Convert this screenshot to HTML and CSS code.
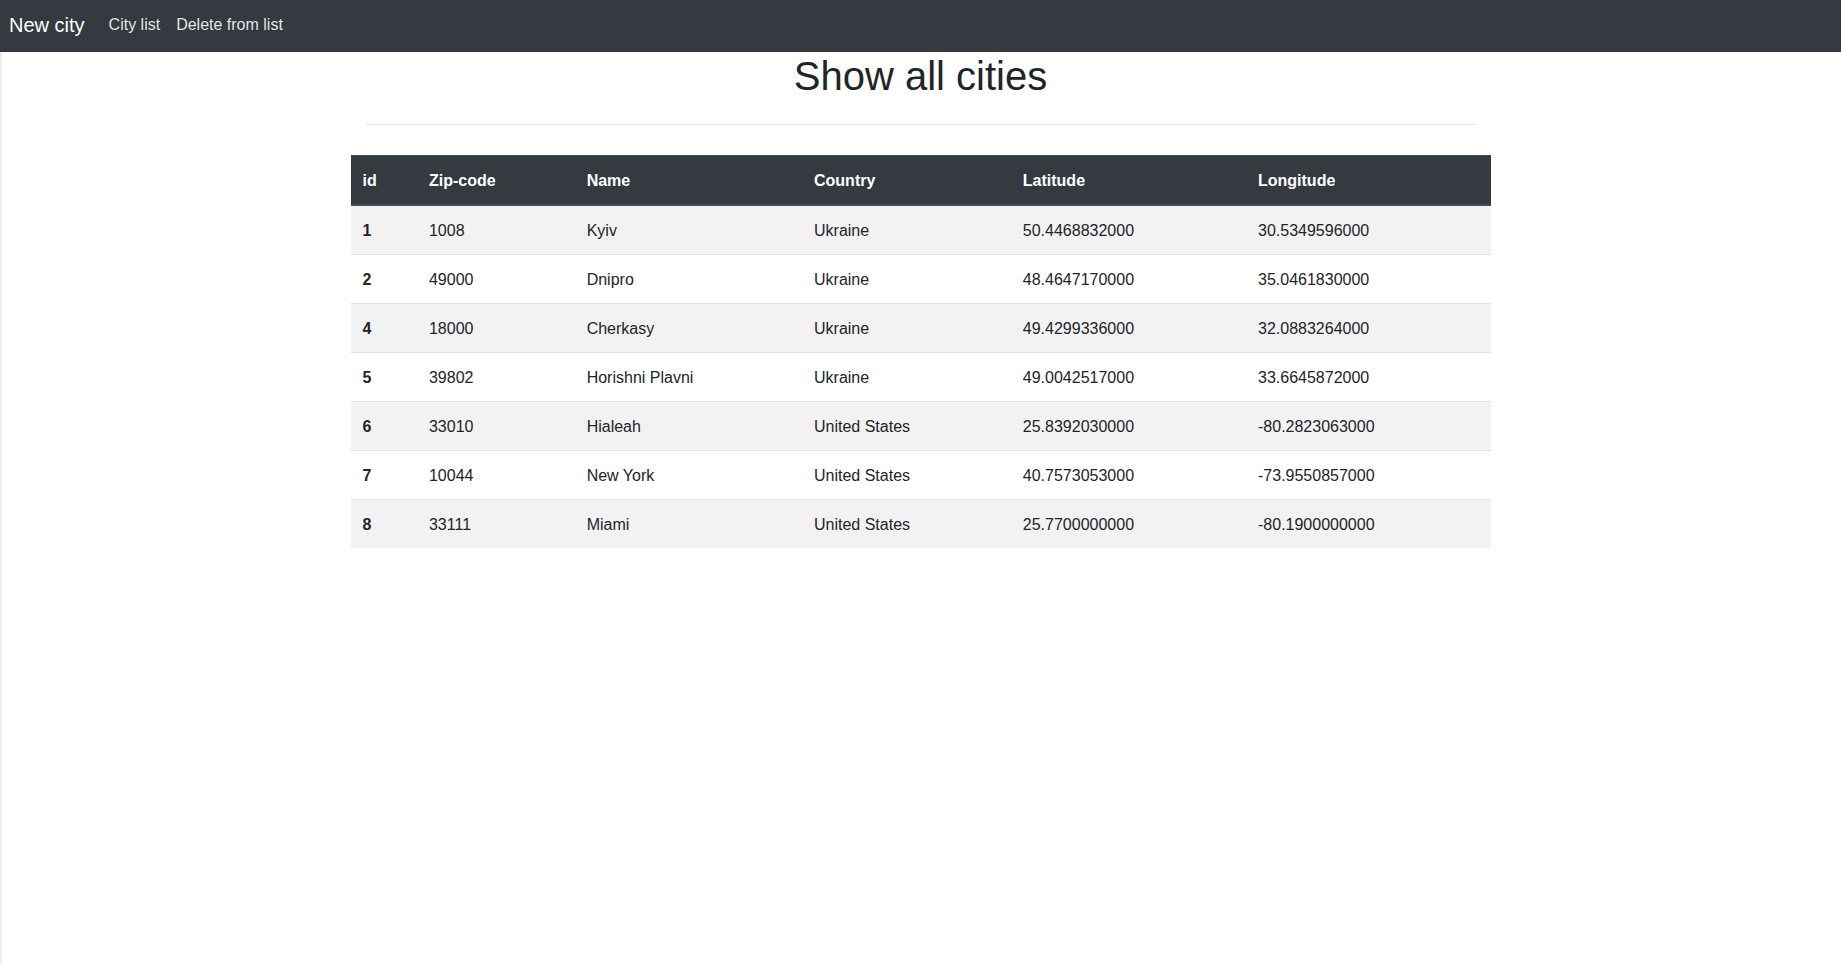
FILE: index.html
```html
<!DOCTYPE html>
<html lang="en">
<head>
<meta charset="utf-8">
<title>Show all cities</title>
<link rel="stylesheet" href="styles.css">
</head>
<body>
<nav class="navbar">
  <a class="brand" href="#">New city</a>
  <ul class="nav">
    <li><a class="nav-link" href="#">City list</a></li>
    <li><a class="nav-link" href="#">Delete from list</a></li>
  </ul>
</nav>
<main class="page">
  <div class="head">
    <h1 class="title">Show all cities</h1>
    <hr class="rule">
  </div>
  <table class="table">
    <thead>
      <tr><th>id</th><th>Zip-code</th><th>Name</th><th>Country</th><th>Latitude</th><th>Longitude</th></tr>
    </thead>
    <tbody>
      <tr><th>1</th><td>1008</td><td>Kyiv</td><td>Ukraine</td><td>50.4468832000</td><td>30.5349596000</td></tr>
      <tr><th>2</th><td>49000</td><td>Dnipro</td><td>Ukraine</td><td>48.4647170000</td><td>35.0461830000</td></tr>
      <tr><th>4</th><td>18000</td><td>Cherkasy</td><td>Ukraine</td><td>49.4299336000</td><td>32.0883264000</td></tr>
      <tr><th>5</th><td>39802</td><td>Horishni Plavni</td><td>Ukraine</td><td>49.0042517000</td><td>33.6645872000</td></tr>
      <tr><th>6</th><td>33010</td><td>Hialeah</td><td>United States</td><td>25.8392030000</td><td>-80.2823063000</td></tr>
      <tr><th>7</th><td>10044</td><td>New York</td><td>United States</td><td>40.7573053000</td><td>-73.9550857000</td></tr>
      <tr><th>8</th><td>33111</td><td>Miami</td><td>United States</td><td>25.7700000000</td><td>-80.1900000000</td></tr>
    </tbody>
  </table>
</main>
</body>
</html>
```
FILE: styles.css
```css
* { box-sizing: border-box; }
html, body { margin: 0; padding: 0; }
body {
  font-family: "Liberation Sans", Arial, sans-serif;
  font-size: 16px;
  line-height: 1.5;
  color: #212529;
  background: #fff;
  min-height: 964px;
  box-shadow: inset 2px 0 0 #ececec;
}
.navbar {
  display: flex;
  align-items: center;
  height: 52px;
  background: #343a40;
  padding: 0 10px 2px 9px;
}
.brand {
  color: #fff;
  font-size: 20px;
  line-height: 30px;
  text-decoration: none;
  margin-right: 16px;
}
.nav {
  display: flex;
  list-style: none;
  margin: 0;
  padding: 0;
}
.nav-link {
  display: block;
  padding: 8px 8px;
  color: rgba(255, 255, 255, 0.88);
  text-decoration: none;
  line-height: 24px;
}
.page {
  width: 1140px;
  margin: 0 auto;
}
.head {
  padding: 0 15px;
}
.title {
  margin: 0 0 8px;
  font-size: 40px;
  font-weight: 500;
  line-height: 1.2;
  text-align: center;
}
.rule {
  margin: 24px 0 30px;
  border: 0;
  border-top: 1px solid rgba(0, 0, 0, 0.1);
}
.table {
  width: 100%;
  border-collapse: collapse;
}
.table th, .table td {
  padding: 13px 12px 11px;
  text-align: left;
  vertical-align: top;
  border-top: 1px solid #dee2e6;
  line-height: 24px;
}
.table thead th {
  background: #343a40;
  color: #fff;
  border-top-color: #454d55;
  border-bottom: 2px solid #454d55;
  font-weight: 700;
}
.table tbody th { font-weight: 700; }
.table tbody tr:nth-child(odd) { background: #f2f2f2; }
.table tbody tr:first-child th, .table tbody tr:first-child td { border-top: 0; }
```
